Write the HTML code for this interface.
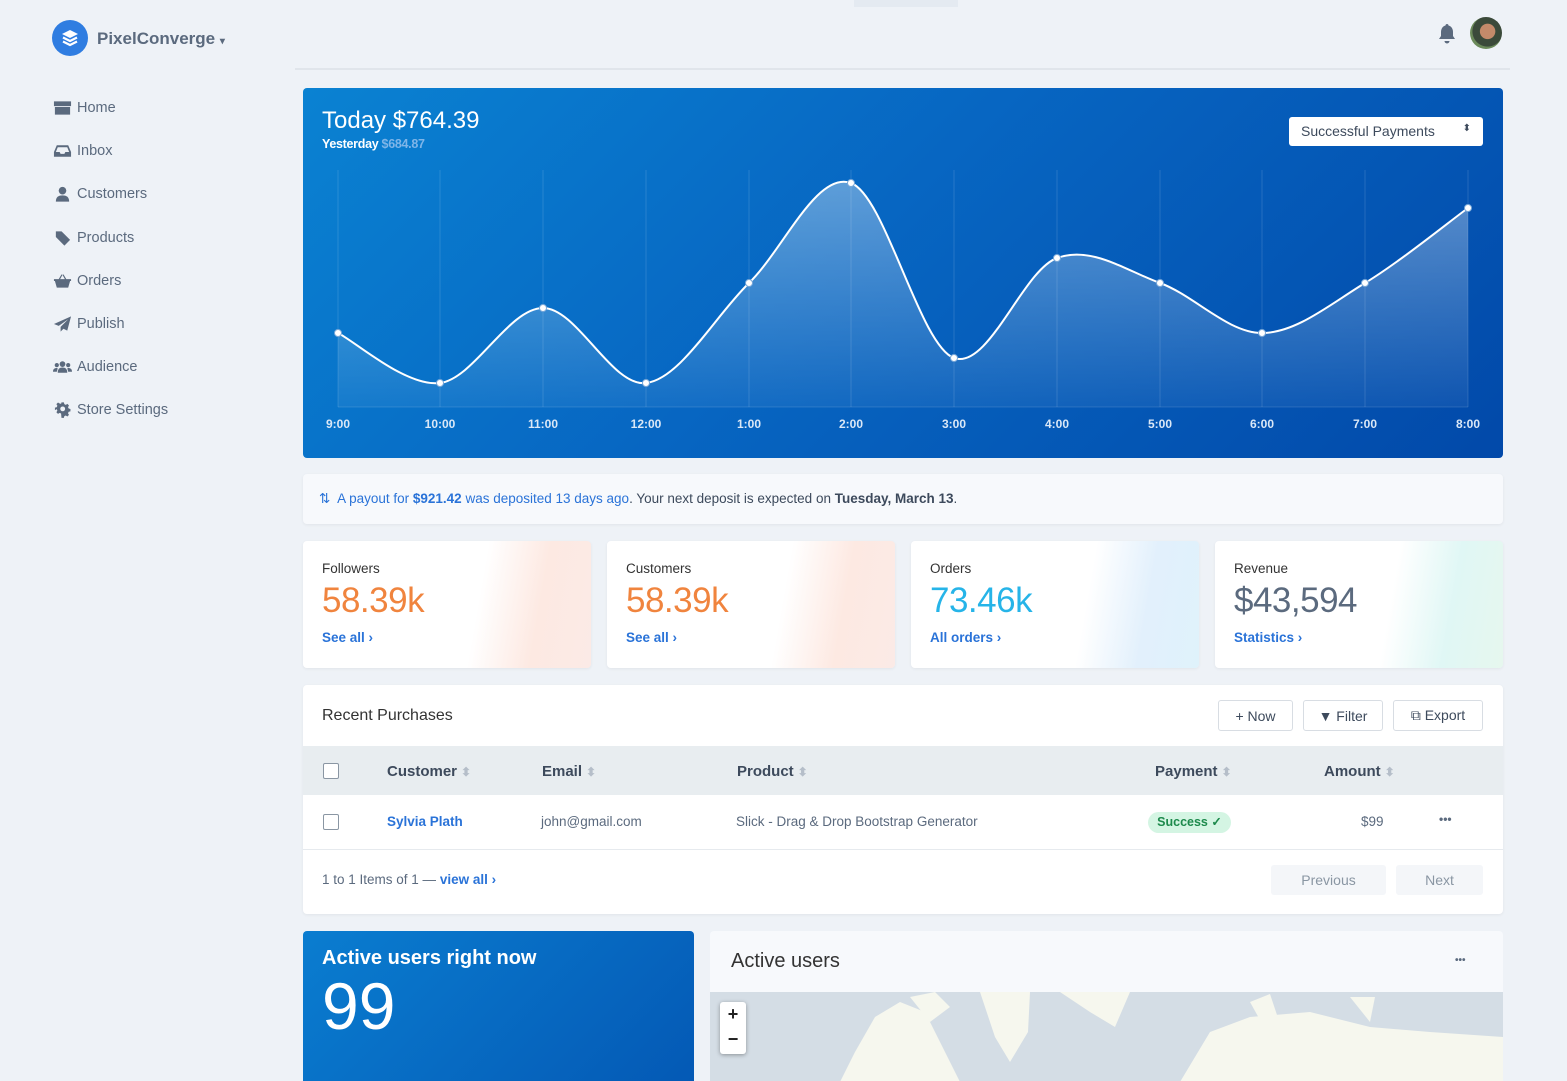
<!DOCTYPE html>
<html><head><meta charset="utf-8"><style>
*{box-sizing:border-box;margin:0;padding:0}
body{width:1567px;height:1077px;overflow:hidden;background:#eef2f7;font-family:"Liberation Sans",sans-serif;color:#3d4a5c;position:relative}
.abs{position:absolute}
.nav{position:absolute;left:53px;font-size:14.5px;color:#5b6a7e;display:flex;align-items:center;margin-top:2px} /* adjusted */
.nav svg{width:19px;height:16px;margin-right:5px;fill:#5b6a7e}
.card{position:absolute;background:#fff;border-radius:4px;box-shadow:0 1px 3px rgba(0,0,0,.06)}
.stat .lbl{position:absolute;left:19px;top:20px;font-size:13.5px;color:#333} /* adjusted */
.stat .num{position:absolute;left:19px;top:40px;font-size:35px;letter-spacing:-0.5px} /* adjusted */
.stat .lnk{position:absolute;left:19px;top:89px;font-size:13.5px;font-weight:bold;color:#2a73d8} /* adjusted */
.btn{position:absolute;top:15px;height:31px;border:1px solid #d8dde3;border-radius:3px;font-size:14px;color:#3d4a5c;display:flex;align-items:center;justify-content:center;background:#fff}
.th{position:absolute;top:17px;font-size:15px;font-weight:bold;color:#3d4a5c}
.th:after{content:"⬍";color:#b5bec9;font-size:12px;margin-left:4px}
.cb{position:absolute;width:16px;height:16px;border:1px solid #8a96a3;border-radius:2px;background:#fff}
</style></head><body>
<div class="abs" style="left:854px;top:0;width:104px;height:7px;background:#e4eaf1"></div>
<div class="abs" style="left:52px;top:20px;width:36px;height:36px;border-radius:50%;background:#2f7de1"></div>
<svg class="abs" style="left:59px;top:27px" width="22" height="22" viewBox="0 0 22 22"><path d="M11 3 L19 7 L11 11 L3 7Z" fill="#fff"/><path d="M4 10.5 L11 14 L18 10.5" stroke="#fff" stroke-width="2.2" fill="none"/><path d="M4 14.5 L11 18 L18 14.5" stroke="#fff" stroke-width="2.2" fill="none"/></svg>
<div class="abs" style="left:97px;top:29px;font-size:17px;font-weight:bold;color:#5b6a7e">PixelConverge <span style="font-size:10px">▾</span></div>
<div class="abs" style="left:295px;top:68px;width:1215px;height:2px;background:#e0e5eb"></div>
<svg class="abs" style="left:1437px;top:23px" width="20" height="22" viewBox="0 0 20 22"><path d="M10 1c1 0 1.5.7 1.5 1.5C14.5 3.3 16 6 16 9v4l2 3H2l2-3V9c0-3 1.5-5.7 4.5-6.5C8.5 1.7 9 1 10 1zM7.5 18h5a2.5 2.5 0 0 1-5 0z" fill="#5b6a7e"/></svg>
<div class="abs" style="left:1470px;top:17px;width:32px;height:32px;border-radius:50%;background:radial-gradient(circle at 55% 45%,#c48a6a 0 30%,#3b4a3a 32% 60%,#6b8a5a 62%)"></div>

<div class="nav" style="top:98px"><svg viewBox="0 0 20 16"><path d="M1 1h18v5H1zM2 7h16v8H2z"/></svg>Home</div>
<div class="nav" style="top:141px"><svg viewBox="0 0 20 16"><path d="M4 2h12l3 7v5H1V9zM3 9h4l1 2h4l1-2h4l-2-5H5z" fill-rule="evenodd"/></svg>Inbox</div>
<div class="nav" style="top:184px"><svg viewBox="0 0 20 16"><circle cx="10" cy="4.5" r="4"/><path d="M3 16c0-5 3-6.5 7-6.5s7 1.5 7 6.5z"/></svg>Customers</div>
<div class="nav" style="top:228px"><svg viewBox="0 0 20 16"><path d="M1 1h8l9 9-6 6-9-9V1z"/></svg>Products</div>
<div class="nav" style="top:271px"><svg viewBox="0 0 20 16"><path d="M1 6h18v2h-1l-2 7H4L2 8H1z M6 6l3-5 1 .5-2.5 4.5zM14 6l-3-5-1 .5 2.5 4.5z"/></svg>Orders</div>
<div class="nav" style="top:314px"><svg viewBox="0 0 20 16"><path d="M19 0L1 8l5 2 10-7-8 8v5l3-3 4 2z"/></svg>Publish</div>
<div class="nav" style="top:357px"><svg viewBox="0 0 20 16"><circle cx="10" cy="5" r="3"/><circle cx="4" cy="6" r="2.2"/><circle cx="16" cy="6" r="2.2"/><path d="M5 14c0-4 2-5.5 5-5.5s5 1.5 5 5.5zM0 13c0-3 1.5-4 4-4l1 .5-1 3.5zM20 13c0-3-1.5-4-4-4l-1 .5 1 3.5z"/></svg>Audience</div>
<div class="nav" style="top:400px"><svg viewBox="0 0 20 16"><path d="M8.5 0h3l.5 2.2 1.8.8 2-1.2 2 2-1.2 2 .8 1.8 2.2.5v3l-2.2.5-.8 1.8 1.2 2-2 2-2-1.2-1.8.8-.5 2.2h-3L8 13.8 6.2 13l-2 1.2-2-2 1.2-2-.8-1.8L.4 9.5v-3l2.2-.5.8-1.8-1.2-2 2-2 2 1.2L8 1.8zM10 5a3 3 0 1 0 0 6 3 3 0 0 0 0-6z" transform="scale(.85) translate(2,0)"/></svg>Store Settings</div>

<div class="abs" style="left:303px;top:88px;width:1200px;height:370px;border-radius:4px;background:linear-gradient(135deg,#0a82d2 0%,#0766c2 45%,#0249a9 100%);overflow:hidden">
<div class="abs" style="left:19px;top:19px;color:#fff;font-size:24px">Today $764.39</div>
<div class="abs" style="left:19px;top:49px;color:#fff;font-size:12.5px;font-weight:bold;letter-spacing:-.3px">Yesterday <span style="color:#7fb5e8">$684.87</span></div>
<div class="abs" style="left:986px;top:29px;width:194px;height:29px;background:#fff;border-radius:3px;font-size:14px;color:#3d4a5c;padding:6px 12px">Successful Payments <span style="float:right;font-size:10px">⬍</span></div>
</div>
<svg class="abs" style="left:0;top:0" width="1567" height="460">
<g stroke="rgba(255,255,255,.13)" stroke-width="1"><line x1="338" y1="170" x2="338" y2="407"/><line x1="440" y1="170" x2="440" y2="407"/><line x1="543" y1="170" x2="543" y2="407"/><line x1="646" y1="170" x2="646" y2="407"/><line x1="749" y1="170" x2="749" y2="407"/><line x1="851" y1="170" x2="851" y2="407"/><line x1="954" y1="170" x2="954" y2="407"/><line x1="1057" y1="170" x2="1057" y2="407"/><line x1="1160" y1="170" x2="1160" y2="407"/><line x1="1262" y1="170" x2="1262" y2="407"/><line x1="1365" y1="170" x2="1365" y2="407"/><line x1="1468" y1="170" x2="1468" y2="407"/><line x1="338" y1="407" x2="1468" y2="407"/></g>
<defs><linearGradient id="g" x1="0" y1="0" x2="0" y2="1"><stop offset="0" stop-color="rgba(255,255,255,.35)"/><stop offset="1" stop-color="rgba(255,255,255,.05)"/></linearGradient></defs>
<path d="M338,333 C355,341.3 406,387.2 440,383 C474,378.8 508.7,308 543,308 C577.3,308 611.7,387.2 646,383 C680.3,378.8 714.8,316.3 749,283 C783.2,249.7 816.8,170.5 851,183 C885.2,195.5 919.7,345.5 954,358 C988.3,370.5 1022.7,270.5 1057,258 C1091.3,245.5 1125.8,270.5 1160,283 C1194.2,295.5 1227.8,333 1262,333 C1296.2,333 1330.7,303.8 1365,283 C1399.3,262.2 1450.8,220.5 1468,208 L1468,407 L338,407Z" fill="url(#g)"/>
<path d="M338,333 C355,341.3 406,387.2 440,383 C474,378.8 508.7,308 543,308 C577.3,308 611.7,387.2 646,383 C680.3,378.8 714.8,316.3 749,283 C783.2,249.7 816.8,170.5 851,183 C885.2,195.5 919.7,345.5 954,358 C988.3,370.5 1022.7,270.5 1057,258 C1091.3,245.5 1125.8,270.5 1160,283 C1194.2,295.5 1227.8,333 1262,333 C1296.2,333 1330.7,303.8 1365,283 C1399.3,262.2 1450.8,220.5 1468,208" fill="none" stroke="#fff" stroke-width="2"/>
<g fill="#fff" stroke="#7aa8d8" stroke-width="1"><circle cx="338" cy="333" r="3.5"/><circle cx="440" cy="383" r="3.5"/><circle cx="543" cy="308" r="3.5"/><circle cx="646" cy="383" r="3.5"/><circle cx="749" cy="283" r="3.5"/><circle cx="851" cy="183" r="3.5"/><circle cx="954" cy="358" r="3.5"/><circle cx="1057" cy="258" r="3.5"/><circle cx="1160" cy="283" r="3.5"/><circle cx="1262" cy="333" r="3.5"/><circle cx="1365" cy="283" r="3.5"/><circle cx="1468" cy="208" r="3.5"/></g>
<g fill="#dbe8f7" font-size="12" font-weight="bold" text-anchor="middle" font-family="Liberation Sans"><text x="338" y="428">9:00</text><text x="440" y="428">10:00</text><text x="543" y="428">11:00</text><text x="646" y="428">12:00</text><text x="749" y="428">1:00</text><text x="851" y="428">2:00</text><text x="954" y="428">3:00</text><text x="1057" y="428">4:00</text><text x="1160" y="428">5:00</text><text x="1262" y="428">6:00</text><text x="1365" y="428">7:00</text><text x="1468" y="428">8:00</text></g>
</svg>

<!-- adjusted: top padding 16px -> 17px -->
<div class="card" style="left:303px;top:474px;width:1200px;height:50px;background:#f7f9fc;font-size:13.5px;padding:17px 0 0 16px;color:#3d4a5c">
<span style="color:#2a73d8">⇅&nbsp; A payout for <b>$921.42</b> was deposited 13 days ago</span>. Your next deposit is expected on <b>Tuesday, March 13</b>.</div>

<div class="card stat" style="left:303px;top:541px;width:288px;height:127px;overflow:hidden;background:linear-gradient(100deg,#fff 60%,#fde9e2 80%,#fbeae6)"><div class="lbl">Followers</div><div class="num" style="color:#f0843e">58.39k</div><div class="lnk">See all ›</div></div>
<div class="card stat" style="left:607px;top:541px;width:288px;height:127px;overflow:hidden;background:linear-gradient(100deg,#fff 60%,#fde9e2 80%,#fbeae6)"><div class="lbl">Customers</div><div class="num" style="color:#f0843e">58.39k</div><div class="lnk">See all ›</div></div>
<div class="card stat" style="left:911px;top:541px;width:288px;height:127px;overflow:hidden;background:linear-gradient(100deg,#fff 60%,#e2f0fc 80%,#dff2fb)"><div class="lbl">Orders</div><div class="num" style="color:#26b4e8">73.46k</div><div class="lnk">All orders ›</div></div>
<div class="card stat" style="left:1215px;top:541px;width:288px;height:127px;overflow:hidden;background:linear-gradient(100deg,#fff 60%,#e0f7f5 80%,#e6f7ee)"><div class="lbl">Revenue</div><div class="num" style="color:#5b6a7e">$43,594</div><div class="lnk">Statistics ›</div></div>

<div class="card" style="left:303px;top:685px;width:1200px;height:229px">
<!-- adjusted: table text positions nudged down 1-2px -->
<div class="abs" style="left:19px;top:22px;font-size:16px;color:#333">Recent Purchases</div>
<div class="btn" style="left:915px;width:75px">+ Now</div>
<div class="btn" style="left:1000px;width:80px">▼ Filter</div>
<div class="btn" style="left:1090px;width:90px">⧉ Export</div>
<div class="abs" style="left:0;top:61px;width:1200px;height:49px;background:#e8edf0">
<div class="cb" style="left:20px;top:17px"></div>
<div class="th" style="left:84px">Customer</div><div class="th" style="left:239px">Email</div><div class="th" style="left:434px">Product</div><div class="th" style="left:852px">Payment</div><div class="th" style="left:1021px">Amount</div></div>
<div class="cb" style="left:20px;top:129px"></div>
<div class="abs" style="left:84px;top:129px;font-size:13.5px;font-weight:bold;color:#2a73d8">Sylvia Plath</div>
<div class="abs" style="left:238px;top:129px;font-size:13.5px;color:#5b6a7e">john@gmail.com</div>
<div class="abs" style="left:433px;top:129px;font-size:13.5px;color:#5b6a7e">Slick - Drag &amp; Drop Bootstrap Generator</div>
<div class="abs" style="left:845px;top:127px;width:83px;height:21px;border-radius:11px;background:#d4f5e3;color:#1d8a4c;font-size:12.5px;font-weight:bold;text-align:center;line-height:21px">Success ✓</div>
<div class="abs" style="left:1058px;top:129px;font-size:13.5px;color:#5b6a7e">$99</div>
<div class="abs" style="left:1136px;top:127px;font-size:12px;color:#5b6a7e;font-weight:bold">•••</div>
<div class="abs" style="left:0;top:164px;width:1200px;height:1px;background:#e6eaee"></div>
<div class="abs" style="left:19px;top:187px;font-size:13.5px;color:#5b6a7e">1 to 1 Items of 1 — <b style="color:#2a73d8">view all ›</b></div>
<div class="abs" style="left:968px;top:180px;width:115px;height:30px;background:#f4f6f9;border-radius:3px;font-size:14px;color:#8a96a3;text-align:center;line-height:30px">Previous</div>
<div class="abs" style="left:1093px;top:180px;width:87px;height:30px;background:#f4f6f9;border-radius:3px;font-size:14px;color:#8a96a3;text-align:center;line-height:30px">Next</div>
</div>

<div class="abs" style="left:303px;top:931px;width:391px;height:150px;border-radius:4px 4px 0 0;background:linear-gradient(135deg,#0a7dd0,#0459b5)">
<div class="abs" style="left:19px;top:16px;color:#fff;font-size:20px;font-weight:bold">Active users right now</div>
<div class="abs" style="left:19px;top:37px;color:#fff;font-size:66px">99</div></div>

<div class="abs" style="left:710px;top:931px;width:793px;height:150px;border-radius:4px 4px 0 0;background:#f7f9fc;overflow:hidden">
<div class="abs" style="left:21px;top:19px;font-size:20px;color:#333">Active users</div>
<div class="abs" style="left:745px;top:24px;font-size:10px;color:#5b6a7e;font-weight:bold">•••</div>
<div class="abs" style="left:0;top:61px;width:793px;height:90px;background:#d4dde5">
<!-- adjusted: land shapes thinner and more scattered -->
<svg width="793" height="90" class="abs"><g fill="#f6f7ee"><path d="M145 60 L165 25 L190 10 L215 20 L230 50 L250 90 L130 90Z"/><path d="M200 5 L225 0 L240 15 L220 30Z"/><path d="M270 0 L320 0 L318 40 L300 70 L285 45Z"/><path d="M350 0 L420 0 L405 35 L380 20Z"/><path d="M500 40 L540 25 L600 20 L660 35 L720 40 L793 45 L793 90 L470 90Z"/><path d="M540 10 l20 -8 10 30 -15 5z"/><path d="M640 5 l25 0 -5 25z"/></g></svg>
<div class="abs" style="left:10px;top:10px;width:26px;height:52px;background:#fff;border-radius:3px;box-shadow:0 1px 4px rgba(0,0,0,.35);font-size:18px;font-weight:bold;text-align:center;line-height:25px;color:#222">+<br>−</div>
</div></div>
</body></html>
